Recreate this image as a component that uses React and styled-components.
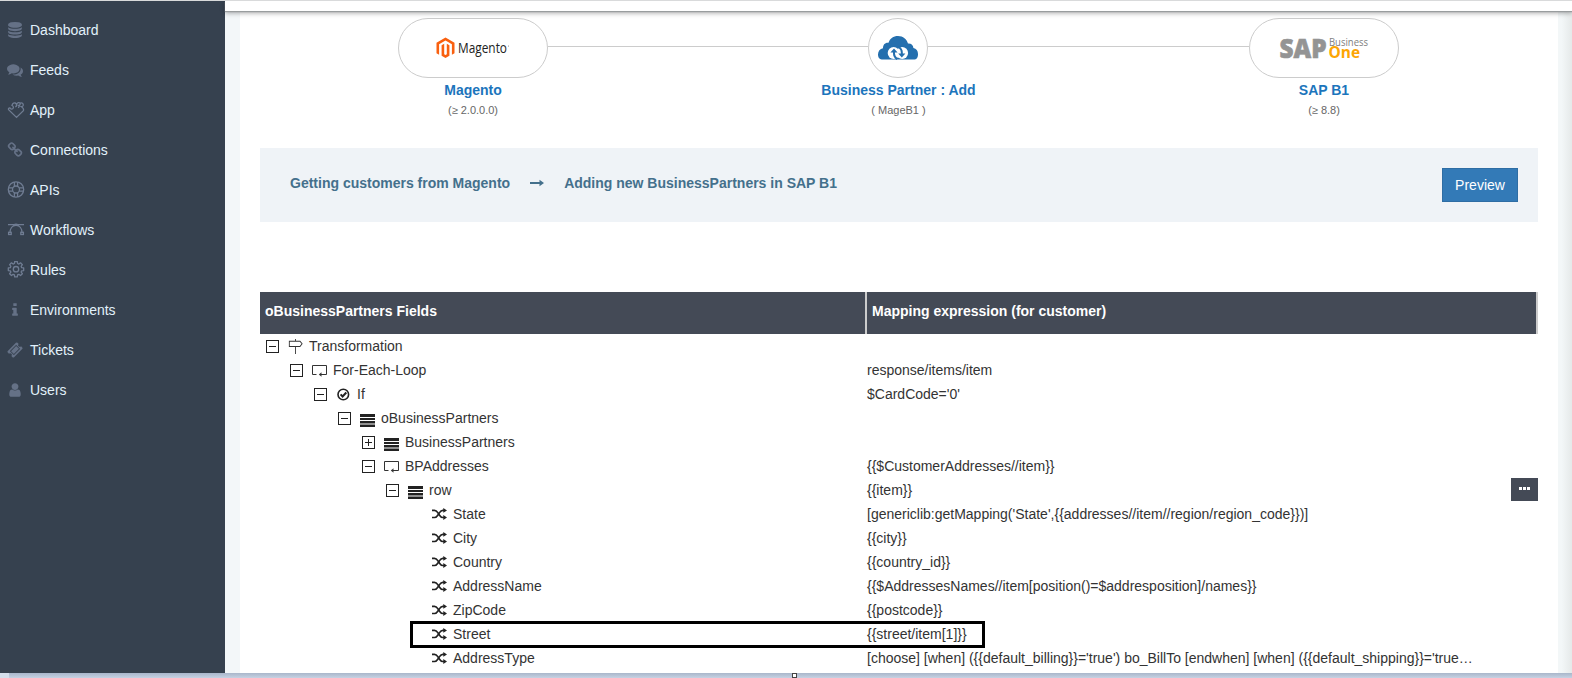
import React from 'react';
import styled, { createGlobalStyle } from 'styled-components';
import { TfiDirection } from 'react-icons/tfi';

const GlobalStyle = createGlobalStyle`
  * { box-sizing: border-box; }
  body {
    margin: 0;
    background: #f3f7f9;
    color: #333;
    font: 14px/24px "Liberation Sans", Arial, sans-serif;
  }
`;

const Page = styled.div`
  display: flex;
  flex-direction: column;
  width: 1572px;
  height: 678px;
  overflow: hidden;
  border-top: 1px solid #d9dadb;
`;

const Body = styled.div`
  display: flex;
  height: 672px;
`;

/* ---------- sidebar ---------- */

const Sidebar = styled.nav`
  display: flex;
  flex-direction: column;
  flex: none;
  width: 225px;
  padding-top: 9px;
  background: #36414f;
`;

const MenuItem = styled.a`
  display: flex;
  align-items: center;
  height: 40px;
  padding-left: 7px;
  color: #e2f1fb;
`;

const MenuIcon = styled.span`
  display: flex;
  width: 23px;
  color: #657186;
  svg { display: block; }
`;

/* ---------- main ---------- */

const Main = styled.main`
  display: flex;
  flex-direction: column;
  flex: 1;
  min-width: 0;
`;

const TopStrip = styled.div`
  position: relative;
  flex: none;
  height: 10px;
  background: #fff;
  box-shadow: 0 1px 1px #999d9e, 0 2px 5px rgba(0, 0, 0, 0.35);
`;

const Content = styled.div`
  display: flex;
  flex: 1;
  min-height: 0;
  padding-left: 15px;
`;

const Panel = styled.section`
  flex: 1;
  padding: 7px 20px 0;
  background: #fff;
`;

const RightGutter = styled.div`
  width: 14px;
  background: linear-gradient(90deg, #f3f7f8 25%, #e5e9e9);
`;

/* ---------- flow diagram ---------- */

const Track = styled.div`
  display: flex;
  align-items: center;
  padding: 0 139px 0 138px;
`;

const Node = styled.div`
  display: flex;
  align-items: center;
  justify-content: center;
  flex: none;
  width: ${(p) => (p.$round ? 60 : 150)}px;
  height: 60px;
  border: 1px solid #ccc;
  border-radius: 30px;
  svg { display: block; overflow: visible; }
`;

const Connector = styled.div`
  flex: ${(p) => (p.$length ? `0 0 ${p.$length}px` : 1)};
  height: 1px;
  margin-top: -3px;
  background: #ccc;
`;

const Captions = styled.div`
  display: flex;
  justify-content: space-between;
  padding: 0 89px 0 88px;
`;

const Caption = styled.div`
  width: 250px;
  text-align: center;
`;

const CaptionTitle = styled.div`
  height: 24px;
  color: #1c75bc;
  font-weight: bold;
`;

const CaptionNote = styled.div`
  height: 16px;
  color: #666;
  font-size: 11px;
  line-height: 16px;
`;

/* ---------- summary bar ---------- */

const Summary = styled.div`
  display: flex;
  align-items: flex-start;
  height: 74px;
  margin-top: 30px;
  padding: 20px 20px 0 30px;
  background: #eff3f7;
  color: #44708c;
  font-weight: bold;
`;

const SummaryText = styled.span`
  line-height: 30px;
`;

const SummaryArrow = styled.svg`
  margin: 11px 20px 0;
`;

const PreviewButton = styled.button`
  width: 76px;
  height: 34px;
  margin-left: auto;
  padding: 0;
  border: 1px solid #2e6da4;
  background: #337ab7;
  color: #fff;
  font: 14px "Liberation Sans", Arial, sans-serif;
`;

/* ---------- mapping table ---------- */

const Table = styled.div`
  margin-top: 70px;
`;

const HeadRow = styled.div`
  display: grid;
  grid-template-columns: 607px 1fr;
  height: 42px;
`;

const HeadCell = styled.div`
  padding-left: 5px;
  border-right: 2px solid #ccc;
  background: #444a56;
  color: #fff;
  font-weight: bold;
  line-height: 38px;
`;

const Row = styled.div`
  position: relative;
  display: grid;
  grid-template-columns: 607px 1fr auto;
  height: 24px;
  white-space: nowrap;
`;

const FieldCell = styled.div`
  display: flex;
  align-items: center;
  padding-left: ${(p) => 6 + p.$level * 24}px;
`;

const Toggle = styled.svg`
  display: block;
  margin-top: 1px;
`;

const TypeIcon = styled.span`
  display: flex;
  width: 21px;
  margin-left: ${(p) => (p.$leaf ? 22 : 9)}px;
  padding-top: ${(p) => p.$drop || 0}px;
  svg { display: block; }
`;

const Highlight = styled.div`
  position: absolute;
  top: -1px;
  left: 150px;
  width: 575px;
  height: 27px;
  border: 3px solid #000;
`;

const RowMenu = styled.button`
  display: flex;
  align-items: center;
  justify-content: center;
  gap: 1px;
  width: 27px;
  height: 23px;
  padding: 0 0 2px;
  border: 0;
  background: #444a56;
`;

const Dot = styled.i`
  width: 3px;
  height: 3px;
  background: #fff;
`;

/* ---------- bottom edge ---------- */

const BottomEdge = styled.div`
  display: flex;
  flex: none;
  height: 5px;
  padding-left: 792px;
  background:
    linear-gradient(#d5dfec, #d5dfec) 0 0 / 9px 5px no-repeat,
    linear-gradient(#a9b6ca, #c6d2e3);
`;

const Grip = styled.div`
  width: 5px;
  height: 5px;
  border: 1px solid #444;
  background: #fff;
`;

/* ---------- icons ---------- */

const Solid = ({ d, size = 16 }) => (
  <svg width={size} height={size} viewBox="0 0 1792 1792" fill="currentColor"><path d={d} /></svg>
);
const Outline = ({ children }) => (
  <svg width="18" height="18" viewBox="0 0 18 18" fill="none" stroke="#6f7c92" strokeWidth="1.3">{children}</svg>
);

const glyphs = {
  database: 'M896 768q237 0 443-43t325-127v170q0 69-103 128t-280 93.5-385 34.5-385-34.5-280-93.5-103-128v-170q119 84 325 127t443 43zm0 768q237 0 443-43t325-127v170q0 69-103 128t-280 93.5-385 34.5-385-34.5-280-93.5-103-128v-170q119 84 325 127t443 43zm0-384q237 0 443-43t325-127v170q0 69-103 128t-280 93.5-385 34.5-385-34.5-280-93.5-103-128v-170q119 84 325 127t443 43zm0-1152q208 0 385 34.5t280 93.5 103 128v128q0 69-103 128t-280 93.5-385 34.5-385-34.5-280-93.5-103-128v-128q0-69 103-128t280-93.5 385-34.5z',
  comments: 'M1408 768q0 139-94 257t-256.5 186.5-353.5 68.5q-86 0-176-16-124 88-278 128-36 9-86 16h-3q-11 0-20.5-8t-11.5-21q-1-3-1-6.5t.5-6.5 2-6l2.5-5 3.5-5.5 4-5 4.5-5 4-4.5q5-6 23-25t26-29.5 22.5-29 25-38.5 20.5-44q-124-72-195-177t-71-224q0-139 94-257t256.5-186.5 353.5-68.5 353.5 68.5 256.5 186.5 94 257zm384 256q0 120-71 224.5t-195 176.5q10 24 20.5 44t25 38.5 22.5 29 26 29.5 23 25q1 1 4 4.5t4.5 5 4 5 3.5 5.5l2.5 5 2 6 .5 6.5-1 6.5q-3 14-13 22t-22 7q-50-7-86-16-154-40-278-128-90 16-176 16-271 0-472-132 58 4 88 4 161 0 309-45t264-129q125-92 192-212t67-254q0-77-23-152 129 71 204 178t75 230z',
  chain: 'M1520 1216q0-40-28-68l-208-208q-28-28-68-28-42 0-72 32 3 3 19 18.5t21.5 21.5 15 19 13 25.5 3.5 27.5q0 40-28 68t-68 28q-15 0-27.5-3.5t-25.5-13-19-15-21.5-21.5-18.5-19q-33 31-33 73 0 40 28 68l206 207q27 27 68 27 40 0 68-26l147-146q28-28 28-67zm-703-705q0-40-28-68l-206-207q-28-28-68-28-39 0-68 27l-147 146q-28 28-28 67 0 40 28 68l208 208q27 27 68 27 42 0 72-31-3-3-19-18.5t-21.5-21.5-15-19-13-25.5-3.5-27.5q0-40 28-68t68-28q15 0 27.5 3.5t25.5 13 19 15 21.5 21.5 18.5 19q33-31 33-73zm895 705q0 120-85 203l-147 146q-83 83-203 83-121 0-204-85l-206-207q-83-83-83-203 0-123 88-209l-88-88q-86 88-208 88-120 0-204-84l-208-208q-84-84-84-204t85-203l147-146q83-83 203-83 121 0 204 85l206 207q83 83 83 203 0 123-88 209l88 88q86-88 208-88 120 0 204 84l208 208q84 84 84 204z',
  info: 'M1216 1344v128q0 26-19 45t-45 19h-512q-26 0-45-19t-19-45v-128q0-26 19-45t45-19h64v-384h-64q-26 0-45-19t-19-45v-128q0-26 19-45t45-19h384q26 0 45 19t19 45v576h64q26 0 45 19t19 45zm-128-1152v192q0 26-19 45t-45 19h-256q-26 0-45-19t-19-45v-192q0-26 19-45t45-19h256q26 0 45 19t19 45z',
  ticket: 'M1024 452l316 316-572 572-316-316zm-211 979l618-618q19-19 19-45t-19-45l-362-362q-18-18-45-18t-45 18l-618 618q-19 19-19 45t19 45l362 362q18 18 45 18t45-18zm889-637l-907 908q-37 37-90.5 37t-90.5-37l-126-126q56-56 56-136t-56-136-136-56-136 56l-125-126q-37-37-37-90.5t37-90.5l907-906q37-37 90.5-37t90.5 37l125 125q-56 56-56 136t56 136 136 56 136-56l126 125q37 37 37 90.5t-37 90.5z',
  user: 'M1536 1399q0 109-62.5 187t-150.5 78h-854q-88 0-150.5-78t-62.5-187q0-85 8.5-160.5t31.5-152 58.5-131 94-89 134.5-34.5q131 128 313 128t313-128q76 0 134.5 34.5t94 89 58.5 131 31.5 152 8.5 160.5zm-256-887q0 159-112.5 271.5t-271.5 112.5-271.5-112.5-112.5-271.5 112.5-271.5 271.5-112.5 271.5 112.5 112.5 271.5z',
};

const PuzzleIcon = () => (
  <Outline>
    <path d="M9.5 16.4 1.8 8.900C1 7.900 1.600 6.700 2.900 6.800c.7 1.900 3.300 1.700 3.500-.3.1-1-.6-1.700-1.400-2 .4-1.600 1.700-2.700 3-2.500.9.2 1 .8 1.500 1.300C10.400 1.600 12.300 1 13.100 2.200c2-1 3.400.2 3.100 2.200-.2.9-.8 1.300-1.700 1.300 1.300.9 2.500 2.500 1.900 3.900zM9.500 3.300c.3 1.200-.2 2.200-1.200 2.600M13.100 2.200c.3 1.200-.4 2.300-1.500 2.300.9.900.5 2-.6 2.200" />
  </Outline>
);

const SupportIcon = () => (
  <Outline>
    <circle cx="9" cy="8.5" r="7.7" />
    <circle cx="9" cy="8.5" r="3.5" />
    <path d="M7.4 1v4.3M10.600 1v4.300M7.400 11.700V16M10.600 11.700V16M1.500 6.900h4.300M1.500 10.100h4.300M12.200 6.900h4.300M12.200 10.100h4.300" />
  </Outline>
);

const VectorIcon = () => (
  <Outline>
    <path d="M1 3.600h16M3 12c0-4.500 2.500-7.600 6-7.600s6 3.100 6 7.600" />
    <rect x="7.6" y="2.6" width="2.8" height="2.2" fill="#6f7c92" stroke="none" />
    <rect x="1.6" y="11.3" width="2.6" height="2.2" />
    <rect x="13.8" y="11.3" width="2.6" height="2.2" />
  </Outline>
);

const gearPoints = (() => {
  const pts = [];
  for (let i = 0; i < 8; i += 1) {
    [[-0.27, 5.9], [-0.17, 7.8], [0.17, 7.8], [0.27, 5.9]].forEach(([off, r]) => {
      const a = (i * Math.PI) / 4 + off;
      pts.push(`${(9 + r * Math.sin(a)).toFixed(2)},${(8.2 - r * Math.cos(a)).toFixed(2)}`);
    });
  }
  return pts.join(' ');
})();

const GearIcon = () => (
  <Outline>
    <polygon points={gearPoints} strokeLinejoin="round" />
    <circle cx="9" cy="8.2" r="2.7" />
  </Outline>
);

const LoopIcon = () => (
  <svg width="15" height="13" viewBox="0 0 15 13" fill="none" stroke="#333">
    <path d="M4.500 10.500H.5v-9h14v9H8" />
    <path d="M9.500 8.300v4.400L6.800 10.500z" fill="#333" stroke="none" />
  </svg>
);

const CheckCircleIcon = () => (
  <svg width="14" height="13" viewBox="0 0 14 13" fill="none" stroke="#222">
    <circle cx="7.3" cy="6.5" r="5.3" strokeWidth="1.6" />
    <path d="m4.600 6.300 2 2.200 3.700-4" strokeWidth="2" />
  </svg>
);

const ListIcon = () => (
  <svg width="15" height="13" viewBox="0 0 15 13" fill="#222">
    <path d="M0 0h15v3H0zM0 4h15v2H0zM0 7h15v2.500H0zM0 10.500h15V13H0z" />
  </svg>
);

const ShuffleIcon = () => (
  <svg width="15" height="12" viewBox="0 0 15 12" fill="none" stroke="#222" strokeWidth="1.7">
    <path d="M0 2.300h2.500c1.500 0 2.300.8 3.300 2.300l1.700 2.600c1 1.500 1.800 2.300 3.300 2.300H12" />
    <path d="M0 9.500h2.500c1.500 0 2.300-.8 3.300-2.300l1.700-2.600c1-1.500 1.800-2.300 3.300-2.300H12" />
    <path d="M11.300 0 15 2.400l-3.700 2.400zM11.300 7.100 15 9.500l-3.700 2.400z" fill="#222" stroke="none" />
  </svg>
);

const MagentoLogo = () => (
  <svg width="76" height="26" viewBox="0 0 76 26">
    <path d="M10.500 2.500 1.500 7.700v10.600l2.600 1.500V9.200l6.400-3.700 6.400 3.700v10.600l2.600-1.500V7.700z" fill="#f9600f" />
    <path d="m11.800 19.300-1.300.8-1.300-.8V8.700l-2.600 1.500v10.600l3.900 2.300 3.900-2.300V10.200l-2.600-1.500z" fill="#f9600f" />
    <text x="23" y="17.800" fontFamily="Open Sans, sans-serif" fontSize="14" fill="#222" textLength="49" lengthAdjust="spacingAndGlyphs">Magento</text>
    <circle cx="73.5" cy="11" r=".5" fill="#777" />
  </svg>
);

const CloudLogo = () => (
  <svg width="40" height="26" viewBox="0 0 40 26">
    <path d="M5 24.500C1.500 24.500 0 22.500 0 19.500c0-3.300 2-5.700 5-6.200C4.800 9.800 7 7.300 10.500 7.700 12 3.400 15.300 1 20 1c5.200 0 8.800 3.200 10 7.500 3.300-.2 5.300 1.800 5.400 4.600C38.300 13.500 40 15.900 40 19c0 3.500-1 5.500-4.500 5.500z" fill="#246fae" />
    <circle cx="15.600" cy="18" r="5.900" fill="#fff" />
    <circle cx="24.200" cy="18" r="5.900" fill="#fff" />
    <g fill="none" stroke="#246fae" strokeWidth="2">
      <path d="M16 15.500v3.200c0 2 .9 3.700 3.200 5.500" />
      <path d="M23.800 20.500v-3.200c0-2-.9-3.700-3.200-5.500" />
    </g>
    <path d="m12.400 17.500 3.600-4 3.600 4zM20.200 18.500l3.600 4 3.600-4z" fill="#246fae" />
  </svg>
);

const SapLogo = () => (
  <svg width="90" height="30" viewBox="0 0 90 30">
    <text x=".5" y="24.5" fontFamily="Open Sans, sans-serif" fontWeight="800" fontSize="27" fill="#949494" textLength="47" lengthAdjust="spacingAndGlyphs" stroke="#949494" strokeWidth=".7">SAP</text>
    <text x="50" y="12.5" fontFamily="Open Sans, sans-serif" fontSize="10" fill="#808080" textLength="39" lengthAdjust="spacingAndGlyphs">Business</text>
    <text x="49.5" y="25" fontFamily="Open Sans, sans-serif" fontWeight="700" fontSize="16" fill="#fda503" textLength="31.5" lengthAdjust="spacingAndGlyphs">One</text>
  </svg>
);

/* ---------- data ---------- */

const menu = [
  ['Dashboard', <Solid d={glyphs.database} />],
  ['Feeds', <Solid d={glyphs.comments} />],
  ['App', <PuzzleIcon />],
  ['Connections', <Solid d={glyphs.chain} />],
  ['APIs', <SupportIcon />],
  ['Workflows', <VectorIcon />],
  ['Rules', <GearIcon />],
  ['Environments', <Solid d={glyphs.info} />],
  ['Tickets', <Solid d={glyphs.ticket} />],
  ['Users', <Solid d={glyphs.user} />],
];

const typeIcons = {
  root: <TfiDirection size={15} />,
  loop: <LoopIcon />,
  check: <CheckCircleIcon />,
  list: <ListIcon />,
  leaf: <ShuffleIcon />,
};

const iconDrop = { root: 1, list: 5 };

const rows = [
  { level: 0, type: 'root', name: 'Transformation', value: '' },
  { level: 1, type: 'loop', name: 'For-Each-Loop', value: 'response/items/item' },
  { level: 2, type: 'check', name: 'If', value: "$CardCode='0'" },
  { level: 3, type: 'list', name: 'oBusinessPartners', value: '' },
  { level: 4, type: 'list', name: 'BusinessPartners', value: '', closed: true },
  { level: 4, type: 'loop', name: 'BPAddresses', value: '{{$CustomerAddresses//item}}' },
  { level: 5, type: 'list', name: 'row', value: '{{item}}', menu: true },
  { level: 6, type: 'leaf', name: 'State', value: "[genericlib:getMapping('State',{{addresses//item//region/region_code}})]" },
  { level: 6, type: 'leaf', name: 'City', value: '{{city}}' },
  { level: 6, type: 'leaf', name: 'Country', value: '{{country_id}}' },
  { level: 6, type: 'leaf', name: 'AddressName', value: '{{$AddressesNames//item[position()=$addresposition]/names}}' },
  { level: 6, type: 'leaf', name: 'ZipCode', value: '{{postcode}}' },
  { level: 6, type: 'leaf', name: 'Street', value: '{{street/item[1]}}', marked: true },
  { level: 6, type: 'leaf', name: 'AddressType', value: "[choose] [when] ({{default_billing}}='true') bo_BillTo [endwhen] [when] ({{default_shipping}}='true…" },
];

function MappingRow({ row }) {
  const leaf = row.type === 'leaf';
  return (
    <Row>
      <FieldCell $level={row.level}>
        {!leaf && (
          <Toggle width="13" height="13" viewBox="0 0 13 13" fill="none" stroke="#222">
            <rect x=".5" y=".5" width="12" height="12" />
            <path d={row.closed ? 'M3 6.500h7M6.500 3v7' : 'M3 6.500h7'} />
          </Toggle>
        )}
        <TypeIcon $leaf={leaf} $drop={iconDrop[row.type]}>{typeIcons[row.type]}</TypeIcon>
        {row.name}
      </FieldCell>
      <div>{row.value}</div>
      {row.menu && <RowMenu aria-label="Row actions"><Dot /><Dot /><Dot /></RowMenu>}
      {row.marked && <Highlight />}
    </Row>
  );
}

export default function App() {
  return (
    <Page>
      <GlobalStyle />
      <Body>
        <Sidebar>
          {menu.map(([label, icon]) => (
            <MenuItem key={label}><MenuIcon>{icon}</MenuIcon>{label}</MenuItem>
          ))}
        </Sidebar>
        <Main>
          <TopStrip />
          <Content>
            <Panel>
              <Track>
                <Node><MagentoLogo /></Node>
                <Connector $length={320} />
                <Node $round><CloudLogo /></Node>
                <Connector />
                <Node><SapLogo /></Node>
              </Track>
              <Captions>
                <Caption><CaptionTitle>Magento</CaptionTitle><CaptionNote>(≥ 2.0.0.0)</CaptionNote></Caption>
                <Caption><CaptionTitle>Business Partner : Add</CaptionTitle><CaptionNote>( MageB1 )</CaptionNote></Caption>
                <Caption><CaptionTitle>SAP B1</CaptionTitle><CaptionNote>(≥ 8.8)</CaptionNote></Caption>
              </Captions>
              <Summary>
                <SummaryText>Getting customers from Magento</SummaryText>
                <SummaryArrow width="14" height="8" viewBox="0 0 14 8" fill="#44708c"><path d="M0 3h9.500V.8L14 4 9.500 7.200V5H0z" /></SummaryArrow>
                <SummaryText>Adding new BusinessPartners in SAP B1</SummaryText>
                <PreviewButton>Preview</PreviewButton>
              </Summary>
              <Table>
                <HeadRow>
                  <HeadCell>oBusinessPartners Fields</HeadCell>
                  <HeadCell>Mapping expression (for customer)</HeadCell>
                </HeadRow>
                {rows.map((row) => <MappingRow key={row.name} row={row} />)}
              </Table>
            </Panel>
            <RightGutter />
          </Content>
        </Main>
      </Body>
      <BottomEdge><Grip /></BottomEdge>
    </Page>
  );
}
